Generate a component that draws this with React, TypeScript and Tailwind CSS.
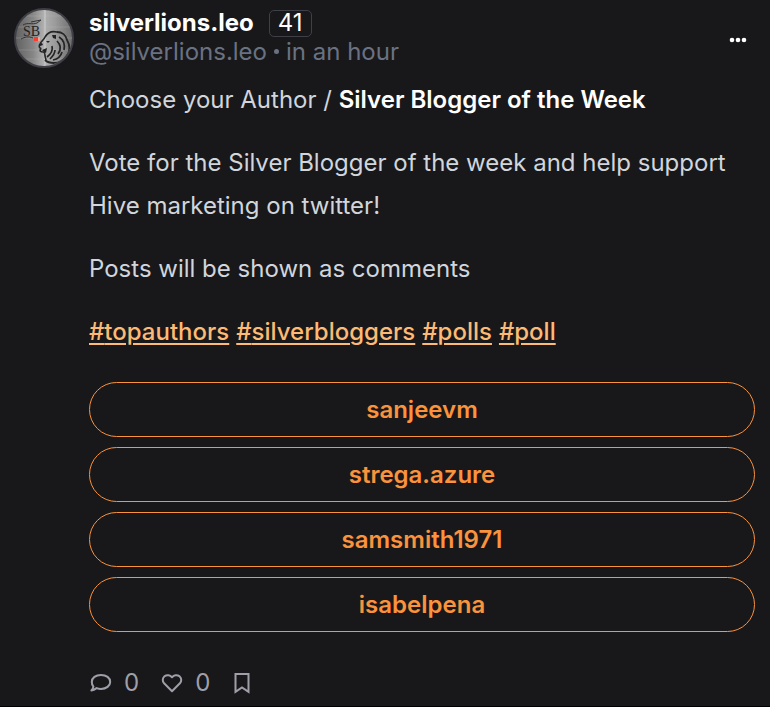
const tags = ['topauthors', 'silverbloggers', 'polls', 'poll']
const choices = ['sanjeevm', 'strega.azure', 'samsmith1971', 'isabelpena']

function Avatar() {
  return (
    <svg viewBox="0 0 60 60" className="size-[60px] shrink-0" role="img" aria-label="silverlions.leo">
      <defs>
        <linearGradient id="metal" x1="0" y1="0" x2="1" y2="0">
          <stop offset="0" stopColor="#606060" />
          <stop offset="0.3" stopColor="#858585" />
          <stop offset="0.5" stopColor="#b0b0b0" />
          <stop offset="0.7" stopColor="#9a9a9a" />
          <stop offset="1" stopColor="#6c6c6c" />
        </linearGradient>
        <clipPath id="disc">
          <circle cx="30" cy="30" r="28" />
        </clipPath>
      </defs>
      <circle cx="30" cy="30" r="29" fill="url(#metal)" stroke="#3f3f46" strokeWidth="2" />
      <g clipPath="url(#disc)">
        <path d="M0 8h60M0 19h60M0 30h60M0 42h60M0 51h60" stroke="#bbb" strokeWidth="1" opacity="0.25" />
        <path d="M31 1v58" stroke="#ddd" strokeWidth="2" opacity="0.35" />
        <path
          d="M9 17c5-3 9 0 14-2l4-3M17 14l10-2M7 31c4-2 7-3 12-1"
          fill="none"
          stroke="#333"
          strokeWidth="1"
        />
        <text x="9" y="28" fill="#222" fontSize="14" fontFamily="Liberation Serif, serif">
          SB
        </text>
        {/* mane outline */}
        <path
          d="M31 29c3-5 8-6 12-5 5 0 9 3 10 8 3 5 3 11 0 16-3 4-7 7-13 7-4 0-7-1-9-3"
          fill="none"
          stroke="#262626"
          strokeWidth="1.800"
        />
        {/* face */}
        <path
          d="M31 29c-1 3-4 4-5 7-1 1-1 3 0 4 1 0 1 1 0 2 0 2 2 2 3 2 2 0 2 2 2 4l1 4"
          fill="none"
          stroke="#262626"
          strokeWidth="1.600"
        />
        <path d="M25 36l3-1 1 2-3 1zM32 33l4 0-2 2zM28 42l5-2-1 5-2-1zM38 27l4 0 0 4-3-1z" fill="#222" />
        <path
          d="M45 29c5 3 6 8 5 13M43 33c4 4 4 9 1 13M38 38c1 4-1 8-5 11M48 44c-1 4-4 7-9 8M41 42c0 4-2 6-5 9"
          fill="none"
          stroke="#242424"
          strokeWidth="1.700"
        />
      </g>
      <path d="M20 29h4v4h-4z" fill="#f43f36" />
      <path d="M24 29h2v4h-2z" fill="#f8a58c" />
    </svg>
  )
}

function CommentIcon() {
  return (
    <svg viewBox="0 0 22 20" className="h-5 w-[22px]" fill="none" stroke="currentColor" strokeWidth="2" strokeLinejoin="round">
      <path d="M11 1.900c5.300 0 9.200 3 9.200 7s-3.900 7-9.200 7c-1.600 0-3.100-.3-4.400-.8-1.500 1.200-3.300 2.200-5.200 2.400 1-1 1.800-2.400 2-3.800C2.400 12.400 1.800 10.700 1.800 8.900c0-4 3.900-7 9.200-7z" />
    </svg>
  )
}

function HeartIcon() {
  return (
    <svg viewBox="0 0 22 20" className="h-5 w-[22px]" fill="none" stroke="currentColor" strokeWidth="2" strokeLinejoin="round">
      <path d="M11 4.300C9.200 1.900 5.800 1.400 3.500 3.300 1.300 5.200 1.200 8.300 3.100 10.300L11 18.200l7.900-7.900c1.900-2 1.800-5.100-.4-7C16.200 1.400 12.800 1.900 11 4.300z" />
    </svg>
  )
}

function BookmarkIcon() {
  return (
    <svg viewBox="0 0 16 22" className="h-[22px] w-4" fill="none" stroke="currentColor" strokeWidth="2">
      <path d="M1.500 2h13v17.800L8 15.400l-6.500 4.400z" />
    </svg>
  )
}

export default function App() {
  return (
    <article className="flex min-h-screen gap-[15px] border-b border-black bg-[#18181a] pt-2 pr-[15px] pl-[14px] font-['Inter',sans-serif] text-2xl text-gray-300">
      <Avatar />
      <div className="min-w-0 flex-1">
        <header className="flex items-center justify-between">
          <div>
            <div className="flex h-[30px] items-center gap-[15px] leading-[30px]">
              <a href="#profile" className="font-bold text-white">silverlions.leo</a>
              <span className="flex h-[27px] items-center rounded-[5px] border border-zinc-700 px-2 text-white">41</span>
            </div>
            <div className="flex h-[27px] items-center gap-[7px] leading-[27px] text-gray-500">
              <a href="#profile">@silverlions.leo</a>
              <span className="size-[5px] rounded-full bg-gray-500" />
              <time>in an hour</time>
            </div>
          </div>
          <button type="button" aria-label="More" className="mt-[6px] mr-2 flex h-8 items-center text-white">
            <svg viewBox="0 0 18 6" className="h-[6px] w-[18px]" fill="currentColor">
              <circle cx="3" cy="3" r="2.300" />
              <circle cx="9" cy="3" r="2.300" />
              <circle cx="15" cy="3" r="2.300" />
            </svg>
          </button>
        </header>

        <div className="mt-[13px] flex flex-col gap-5 leading-[43px]">
          <p>
            Choose your Author / <strong className="font-semibold text-white">Silver Blogger of the Week</strong>
          </p>
          <p>Vote for the Silver Blogger of the week and help support Hive marketing on twitter!</p>
          <p>Posts will be shown as comments</p>
          <p className="flex flex-wrap gap-x-[7px] font-medium text-[#fdba74]">
            {tags.map((tag) => (
              <a key={tag} href={`#${tag}`} className="underline decoration-2 underline-offset-3">
                #{tag}
              </a>
            ))}
          </p>
        </div>

        <div className="mt-[29px] flex flex-col gap-[10px]">
          {choices.map((choice) => (
            <button
              key={choice}
              type="button"
              className="h-[55px] rounded-full border border-[#fb923c] font-semibold text-[#fb923c]"
            >
              {choice}
            </button>
          ))}
        </div>

        <footer className="mt-9 flex h-[30px] items-center gap-[22px] pl-px leading-[30px] text-zinc-400">
          <button type="button" aria-label="Comments" className="flex items-center gap-3">
            <CommentIcon />
            0
          </button>
          <button type="button" aria-label="Likes" className="flex items-center gap-3">
            <HeartIcon />
            0
          </button>
          <button type="button" aria-label="Bookmark" className="ml-[2px]">
            <BookmarkIcon />
          </button>
        </footer>
      </div>
    </article>
  )
}
